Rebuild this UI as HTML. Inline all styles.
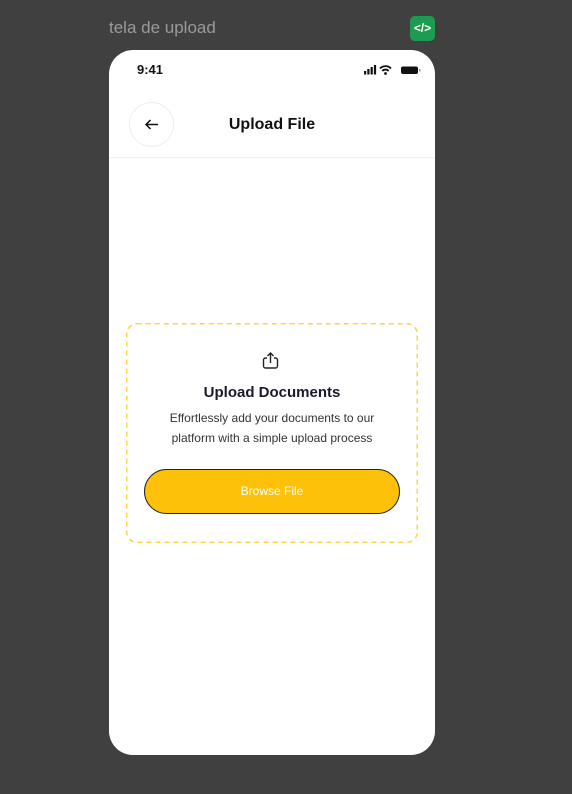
<!DOCTYPE html>
<html><head><style>
body{margin:0;width:572px;height:794px;background:#404040;position:relative;overflow:hidden;font-family:"Liberation Sans",sans-serif}
.t{position:absolute;left:109px;top:18px;font-size:17px;color:#9a9a9a}
.code{position:absolute;left:410px;top:16px;width:25px;height:25px;background:#1e9b52;border-radius:5px;color:#fff;font-size:12px;font-weight:bold;text-align:center;line-height:25px}
.ph{position:absolute;left:109px;top:50px;width:326px;height:705px;background:#fff;border-radius:24px;overflow:hidden}
.time{position:absolute;left:28px;top:12px;font-size:13px;font-weight:bold;color:#111}
.back{position:absolute;left:20px;top:52px;width:43px;height:43px;border:1px solid #eee;border-radius:50%}
.title{position:absolute;left:0;width:326px;text-align:center;top:66px;font-size:16px;font-weight:bold;color:#111}
.hr{position:absolute;left:0;right:0;top:107px;border-top:1px solid #f0f0f0}
.box{position:absolute;left:17px;top:273px;width:292px;height:220px}
.h{position:absolute;left:0;right:0;top:61px;text-align:center;font-size:15px;font-weight:bold;color:#1a1a2a}
.p{position:absolute;left:0;right:0;top:86px;text-align:center;font-size:12px;line-height:19.5px;color:#333}
.btn{position:absolute;left:18px;top:146px;width:256px;height:45px;background:#fdc10a;border:1px solid #222;border-radius:23px;box-sizing:border-box;color:#fff;text-align:center;line-height:43px;font-size:12px}
</style></head><body>
<div class="t">tela de upload</div>
<div class="code">&lt;/&gt;</div>
<div class="ph">
<div class="time">9:41</div>
<svg style="position:absolute;left:254px;top:14px" width="64" height="12">
<rect x="1" y="7" width="2.2" height="3.5" fill="#111"/><rect x="4.3" y="5" width="2.2" height="5.5" fill="#111"/><rect x="7.6" y="3" width="2.2" height="7.5" fill="#111"/><rect x="10.9" y="1" width="2.2" height="9.5" fill="#111"/>
<path d="M17 4.5a7.5 7.5 0 0 1 11 0M19.3 7a4.3 4.3 0 0 1 6.4 0" stroke="#111" stroke-width="1.8" fill="none"/><circle cx="22.5" cy="9.5" r="1.4" fill="#111"/>
<rect x="38" y="2.5" width="17" height="7.5" rx="2" fill="#111"/><rect x="56" y="5" width="1.4" height="2.5" fill="#999"/>
</svg>
<div class="back"><svg width="43" height="43"><path d="M16 21.5h12M20.5 17l-4.5 4.5 4.5 4.5" stroke="#111" stroke-width="1.5" fill="none"/></svg></div>
<div class="title">Upload File</div>
<div class="hr"></div>
<div class="box">
<svg style="position:absolute;left:0;top:0" width="292" height="220"><rect x="0.75" y="0.75" width="290.5" height="218.5" rx="10" fill="none" stroke="#fcd34d" stroke-width="1.5" stroke-dasharray="5 4"/></svg>
<svg style="position:absolute;left:134px;top:27px" width="22" height="22"><path d="M7 8H5.5a2 2 0 0 0-2 2v6a2 2 0 0 0 2 2h10a2 2 0 0 0 2-2v-6a2 2 0 0 0-2-2H14M10.5 13V3M7.5 6l3-3 3 3" stroke="#222" stroke-width="1.4" fill="none"/></svg>
<div class="h">Upload Documents</div>
<div class="p">Effortlessly add your documents to our<br>platform with a simple upload process</div>
<div class="btn">Browse File</div>
</div>
</div>
</body></html>
